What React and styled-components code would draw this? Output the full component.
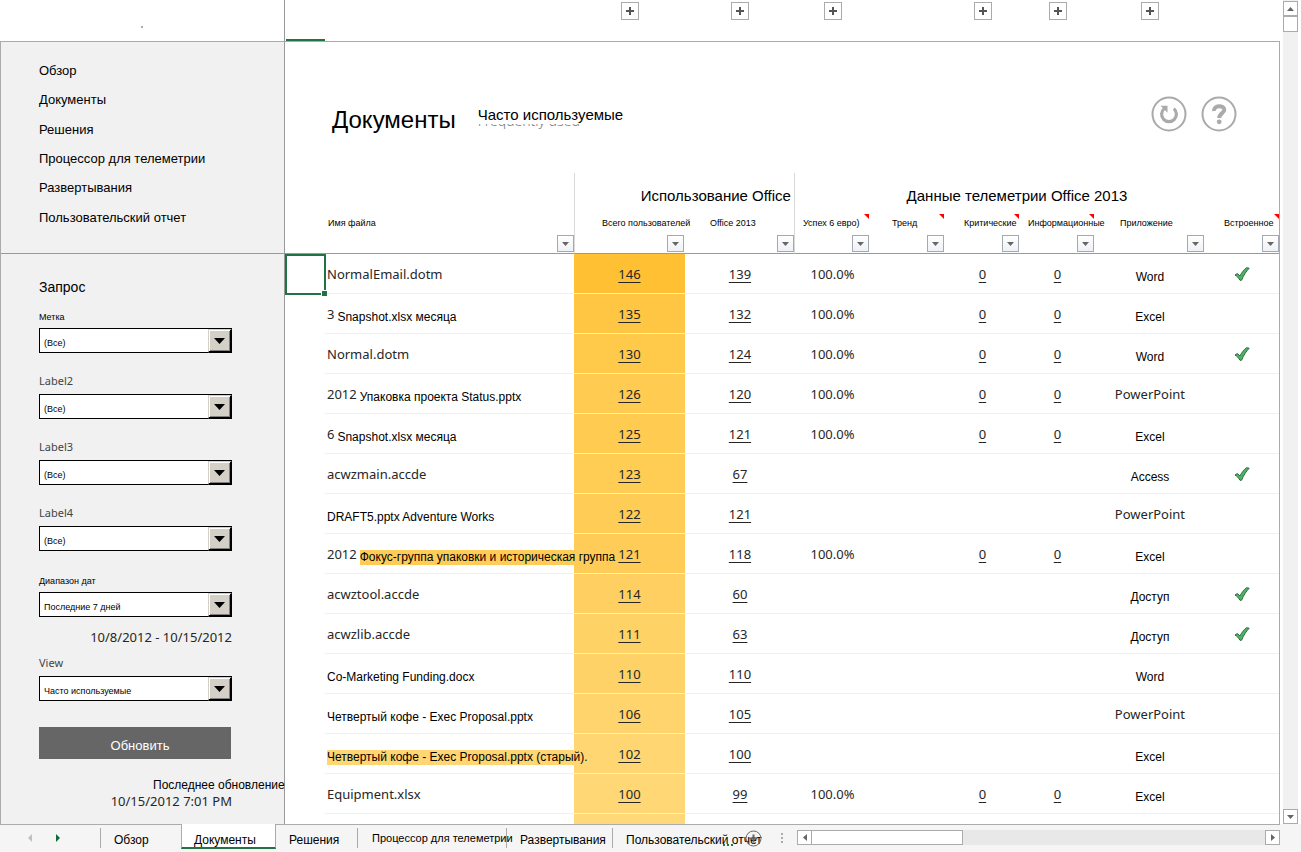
import React from "react";
import styled, { createGlobalStyle } from "styled-components";

const SANS = '"Liberation Sans", Arial, sans-serif';
const SEGOE = '"Noto Sans", "Open Sans", sans-serif';
const LINE = "#ababab";
const GREEN = "#217346";
const COLUMNS = "40px minmax(0, 1fr) 111px 110px 75px 75px 75px 75px 110px 74px";

const GlobalStyle = createGlobalStyle`
  *, *::before, *::after { box-sizing: border-box; }
  body { margin: 0; background: #fff; color: #000; font-family: ${SANS}; font-size: 13px; }
  button, select { font: inherit; color: inherit; }
`;

const Page = styled.div`
  height: 100vh;
  display: flex;
  flex-direction: column;
  overflow: hidden;
`;

const Workspace = styled.div`
  flex: 1;
  min-height: 0;
  display: flex;
  gap: 3px;
  padding-right: 3px;
`;

const Panes = styled.div`
  flex: 1;
  min-width: 0;
  display: grid;
  grid-template-columns: 285px minmax(0, 1fr);
  grid-template-rows: 42px minmax(0, 1fr);
`;

const Corner = styled.div`
  display: flex;
  align-items: flex-end;
  justify-content: center;
  padding-bottom: 13px;
  border-right: 1px solid #999;
  border-bottom: 1px solid ${LINE};
`;

const Dot = styled.i`
  width: 2px;
  height: 2px;
  background: ${LINE};
`;

const OutlineBar = styled.div`
  display: grid;
  grid-template-columns: ${COLUMNS};
  border-bottom: 1px solid ${LINE};
`;

const SelectedColumn = styled.div`
  align-self: end;
  height: 2px;
  margin-left: 1px;
  background: ${GREEN};
`;

const ExpandButton = styled.button`
  width: 18px;
  height: 18px;
  margin: 2px 2px 0 0;
  padding: 0;
  display: grid;
  place-items: center;
  justify-self: center;
  grid-column: ${(p) => p.$column};
  background: #fff;
  border: 1px solid ${LINE};
`;

const Sidebar = styled.aside`
  background: #f1f1f1;
  border-left: 1px solid ${LINE};
  border-right: 1px solid #999;
`;

const Nav = styled.nav`
  height: 212px;
  padding: 14px 38px 21px;
  display: grid;
  grid-auto-rows: 1fr;
  align-items: center;
  border-bottom: 1px solid #999;
`;

const NavLink = styled.a`
  color: #000;
  font-size: 13px;
  text-decoration: none;
`;

const Query = styled.form`
  width: 231px;
  padding: 23px 0 0 38px;
`;

const QueryTitle = styled.h2`
  margin: 0 0 9px;
  font-size: 14px;
  line-height: 20px;
  font-weight: 400;
`;

const Field = styled.div`
  margin-top: ${(p) => (p.$first ? 0 : p.$tight ? 8 : 19)}px;
`;

const FieldLabel = styled.label`
  display: block;
  height: 22px;
  line-height: ${(p) => (p.$native ? 18 : 22)}px;
  font-family: ${(p) => (p.$native ? SEGOE : SANS)};
  font-size: ${(p) => (p.$native ? 11 : 9)}px;
  color: ${(p) => (p.$native ? "#444" : "#000")};
`;

const SelectBox = styled.div`
  position: relative;
  width: 193px;
  height: 25px;
`;

const Select = styled.select`
  appearance: none;
  width: 100%;
  height: 100%;
  padding: 5px 26px 0 4px;
  background: #fff;
  border: 1px solid #000;
  border-radius: 0;
  font-size: 9px;
`;

const SelectArrow = styled.span`
  position: absolute;
  top: 1px;
  right: 0;
  width: 24px;
  height: 24px;
  display: grid;
  place-items: center;
  pointer-events: none;
  background: #d4d0c8;
  border: solid;
  border-width: 1px 2px 2px 1px;
  border-color: #d4d0c8 #000 #000 #d4d0c8;
  box-shadow: inset 1px 1px #fff, inset -1px -1px #808080;
`;

const DateRange = styled.p`
  margin: 11px 0 0;
  text-align: right;
  font-family: ${SEGOE};
  font-size: 13px;
  line-height: 18px;
  color: #262626;
`;

const RefreshButton = styled.button`
  width: 192px;
  height: 32px;
  margin-top: 26px;
  padding: 4px 0 0 10px;
  display: block;
  border: 0;
  background: #666;
  color: #fff;
  font-size: 13px;
`;

const Updated = styled.div`
  margin: 18px 0 0;
  line-height: 16px;
`;

const UpdatedLabel = styled.div`
  padding-left: 114px;
  font-size: 12px;
  white-space: nowrap;
`;

const UpdatedTime = styled.div`
  text-align: right;
  font-family: ${SEGOE};
  font-size: 13px;
  color: #262626;
`;

const Sheet = styled.main`
  min-width: 0;
  overflow: hidden;
  border-right: 1px solid ${LINE};
`;

const SheetHeader = styled.header`
  height: 131px;
  padding: 54px 42px 0 47px;
  display: flex;
  align-items: flex-start;
`;

const Title = styled.h1`
  margin: 10px 22px 0 0;
  font-size: 24px;
  line-height: 28px;
  font-weight: 400;
`;

const Subtitle = styled.div`
  display: grid;
  margin-top: 9px;
  font-size: 15px;
  white-space: nowrap;
`;

const SubtitleText = styled.span`
  grid-area: 1 / 1;
  height: 19px;
  line-height: 20px;
  background: #fff;
`;

const SubtitleShadow = styled.span`
  grid-area: 1 / 1;
  padding-top: 7px;
  line-height: 18px;
  font-family: ${SEGOE};
  font-size: 14px;
  font-weight: 300;
  color: #777;
`;

const Actions = styled.div`
  margin-left: auto;
  display: flex;
  gap: 14px;
`;

const RoundButton = styled.button`
  width: 36px;
  height: 36px;
  padding: 0;
  border: 0;
  background: none;
  svg { display: block; }
`;

const Table = styled.table`
  width: 100%;
  table-layout: fixed;
  border-collapse: separate;
  border-spacing: 0;
`;

const RULES = {
  left: "border-left: 1px solid #d9d9d9;",
  right: "border-right: 1px solid #d9d9d9;",
  both: "border-left: 1px solid #d9d9d9; border-right: 1px solid #d9d9d9;",
};

const GroupHead = styled.th`
  height: 38px;
  padding: 6px ${(p) => p.$right || 0}px 0 0;
  text-align: ${(p) => p.$align || "left"};
  font-size: 15px;
  font-weight: 400;
  white-space: nowrap;
  ${(p) => RULES[p.$rule]}
`;

const Head = styled.th`
  position: relative;
  height: 43px;
  padding: 0;
  font-size: 9px;
  font-weight: 400;
  text-align: left;
  vertical-align: top;
  white-space: nowrap;
  border-bottom: 1px solid #999;
  ${(p) => RULES[p.$rule]}
`;

const HeadInner = styled.div`
  height: 42px;
  padding: 5px ${(p) => (p.$flush ? 0 : 1)}px 1px 0;
  display: flex;
  flex-direction: column;
  justify-content: space-between;
`;

const HeadText = styled.span`
  padding-left: ${(p) => p.$indent}px;
  line-height: 14px;
`;

const FilterButton = styled.button`
  width: 17px;
  height: 17px;
  padding: 0;
  align-self: flex-end;
  display: grid;
  place-items: center;
  border: 1px solid #a3a9b3;
  background: linear-gradient(#fff, #eef1f6);
`;

const CommentMark = styled.i`
  position: absolute;
  top: 3px;
  right: ${(p) => (p.$flush ? 0 : 1)}px;
  border-top: 5px solid #f00;
  border-left: 5px solid transparent;
`;

const Cell = styled.td`
  height: 40px;
  padding: 0 0 0 ${(p) => p.$indent || 0}px;
  text-align: ${(p) => p.$align || "center"};
  vertical-align: middle;
  white-space: nowrap;
  border-bottom: 1px solid ${(p) => (p.$heat ? "#fff0cf" : "#f0f0f0")};
  svg { display: block; margin: 0 auto; }
`;

const Gutter = styled.td`
  position: relative;
  padding: 0;
`;

const Selection = styled.div`
  position: absolute;
  inset: 0 -1px -1px 0;
  border: 2px solid ${GREEN};
  &::after {
    content: "";
    position: absolute;
    right: -3px;
    bottom: -3px;
    width: 6px;
    height: 6px;
    background: ${GREEN};
    border: solid #fff;
    border-width: 1px 0 0 1px;
  }
`;

const Name = styled.span`
  display: flex;
  align-items: center;
  gap: 3px;
`;

const Native = styled.span`
  font-family: ${SEGOE};
  font-size: 13px;
  line-height: 18px;
  color: #262626;
`;

const Translated = styled.span`
  display: inline-block;
  padding-bottom: 0;
  margin-top: 7px;
  font-size: 12px;
  line-height: 15px;
  vertical-align: top;
`;

const Count = styled.a`
  font-family: ${SEGOE};
  font-size: 13px;
  line-height: 18px;
  color: #262626;
  text-decoration: underline;
  text-underline-offset: 3px;
`;

const ScrollColumn = styled.div`
  width: 15px;
  padding-top: 1px;
  display: flex;
  flex-direction: column;
  background: #f1f1f1;
`;

const ScrollButton = styled.button`
  width: 15px;
  height: 15px;
  padding: 0;
  flex: none;
  display: grid;
  place-items: center;
  background: #fff;
  border: 1px solid ${LINE};
`;

const VerticalThumb = styled.div`
  height: 16px;
  margin-bottom: auto;
  background: #fff;
  border: 1px solid ${LINE};
`;

const TabBar = styled.footer`
  height: 28px;
  flex: none;
  padding-right: 21px;
  background: #f5f5f5;
`;

const TabStrip = styled.div`
  height: 100%;
  display: flex;
  border-top: 1px solid ${LINE};
`;

const Tabs = styled.div`
  flex: 1;
  min-width: 0;
  display: flex;
`;

const TabArrows = styled.div`
  width: 101px;
  height: 20px;
  margin-top: 3px;
  padding: 0 38px 0 25px;
  display: flex;
  justify-content: space-between;
  border-right: 1px solid ${LINE};
`;

const ArrowButton = styled.button`
  width: 9px;
  padding: 0;
  display: grid;
  place-items: center;
  border: 0;
  background: none;
`;

const Tab = styled.a`
  width: ${(p) => p.$width}px;
  height: 20px;
  margin-top: 3px;
  padding: ${(p) => (p.$small ? 0 : 2)}px 0 0 ${(p) => (p.$small ? 14 : 13)}px;
  flex: none;
  line-height: 20px;
  font-size: ${(p) => (p.$small ? 11 : 12)}px;
  white-space: nowrap;
  text-decoration: none;
  color: #000;
  border-right: ${(p) => (p.$last ? "0" : `1px solid ${LINE}`)};
`;

const ActiveTab = styled(Tab)`
  height: 25px;
  margin-top: -1px;
  padding: 7px 0 0 12px;
  line-height: 18px;
  background: #fff;
  border-left: 1px solid ${LINE};
  border-bottom: 2px solid ${GREEN};
`;

const MoreSheets = styled.button`
  width: 16px;
  height: 20px;
  margin: 4px 6px 0 -22px;
  padding: 0;
  border: 0;
  background: none;
  svg { display: block; margin-top: 11px; }
`;

const AddSheet = styled.button`
  width: 17px;
  height: 17px;
  margin: 5px 0 0;
  padding: 0;
  border: 0;
  background: none;
  svg { display: block; }
`;

const Grip = styled.span`
  width: 2px;
  height: 12px;
  margin: 8px 14px 0 auto;
  background: repeating-linear-gradient(${LINE} 0 2px, transparent 2px 4px);
`;

const ScrollRow = styled.div`
  width: 483px;
  height: 15px;
  margin-top: 5px;
  display: flex;
  justify-content: space-between;
  background: #e8e8e8;
`;

const HorizontalThumb = styled.div`
  width: 152px;
  margin: 0 auto 0 -1px;
  background: #fff;
  border: 1px solid ${LINE};
`;

const Triangle = ({ dir, width = 7, height = 4, fill = "#666" }) => {
  const d = {
    down: `M0 0H${width}L${width / 2} ${height}Z`,
    up: `M0 ${height}H${width}L${width / 2} 0Z`,
    left: `M${width} 0V${height}L0 ${height / 2}Z`,
    right: `M0 0V${height}L${width} ${height / 2}Z`,
  }[dir];
  return (
    <svg width={width} height={height} aria-hidden="true">
      <path d={d} fill={fill} />
    </svg>
  );
};

const Plus = () => (
  <svg width="8" height="8" aria-hidden="true">
    <path d="M3 0h2v3h3v2H5v3H3V5H0V3h3z" fill="#555" />
  </svg>
);

const Check = () => (
  <svg width="16" height="14" viewBox="0 0 16 14" aria-label="Да">
    <path
      d="M1 8l2.4-1.6L6 9c1.6-3.4 3.6-6 6.500-8.300l2.700.500C12 4.500 9.500 8.500 7.600 13.200L6 13.300C4.600 11 3 9.300 1 8z"
      fill="#4fb269"
      stroke="#2d6b3c"
      strokeWidth="1"
      strokeLinejoin="round"
    />
  </svg>
);

const nav = ["Обзор", "Документы", "Решения", "Процессор для телеметрии", "Развертывания", "Пользовательский отчет"];

const filters = [
  { id: "label1", label: "Метка", value: "(Все)" },
  { id: "label2", label: "Label2", value: "(Все)", native: true },
  { id: "label3", label: "Label3", value: "(Все)", native: true },
  { id: "label4", label: "Label4", value: "(Все)", native: true },
  { id: "range", label: "Диапазон дат", value: "Последние 7 дней" },
];

const heads = [
  { text: "Имя файла", indent: 3, flush: true },
  { text: "Всего пользователей", indent: 27, rule: "left" },
  { text: "Office 2013", indent: 25, rule: "right", flush: true },
  { text: "Успех 6 евро)", indent: 8, mark: true },
  { text: "Тренд", indent: 22, mark: true },
  { text: "Критические", indent: 19, mark: true },
  { text: "Информационные", indent: 8, mark: true },
  { text: "Приложение", indent: 25 },
  { text: "Встроенное", indent: 19, mark: true, flush: true },
];

const rows = [
  { native: "NormalEmail.dotm", total: 146, office: 139, ok: true, app: "Word", builtIn: true },
  { native: "3", name: "Snapshot.xlsx месяца", total: 135, office: 132, ok: true, app: "Excel" },
  { native: "Normal.dotm", total: 130, office: 124, ok: true, app: "Word", builtIn: true },
  { native: "2012", name: "Упаковка проекта Status.pptx", total: 126, office: 120, ok: true, app: "PowerPoint" },
  { native: "6", name: "Snapshot.xlsx месяца", total: 125, office: 121, ok: true, app: "Excel" },
  { native: "acwzmain.accde", total: 123, office: 67, app: "Access", builtIn: true },
  { name: "DRAFT5.pptx Adventure Works", total: 122, office: 121, app: "PowerPoint" },
  { native: "2012", name: "Фокус-группа упаковки и историческая группа", marked: true, total: 121, office: 118, ok: true, app: "Excel" },
  { native: "acwztool.accde", total: 114, office: 60, app: "Доступ", builtIn: true },
  { native: "acwzlib.accde", total: 111, office: 63, app: "Доступ", builtIn: true },
  { name: "Co-Marketing Funding.docx", total: 110, office: 110, app: "Word" },
  { name: "Четвертый кофе - Exec Proposal.pptx", total: 106, office: 105, app: "PowerPoint" },
  { name: "Четвертый кофе - Exec Proposal.pptx (старый).", marked: true, total: 102, office: 100, app: "Excel" },
  { native: "Equipment.xlsx", total: 100, office: 99, ok: true, app: "Excel" },
  { total: 98 },
];

const heat = (value) => {
  const t = (146 - value) / 46;
  return `rgb(255, ${Math.round(193 + t * 22)}, ${Math.round(51 + t * 66)})`;
};

const FilterField = ({ id, label, value, native, first, tight }) => (
  <Field $first={first} $tight={tight}>
    <FieldLabel htmlFor={id} $native={native}>{label}</FieldLabel>
    <SelectBox>
      <Select id={id}>
        <option>{value}</option>
      </Select>
      <SelectArrow>
        <Triangle dir="down" width={11} height={6} fill="#000" />
      </SelectArrow>
    </SelectBox>
  </Field>
);

const Row = ({ row, selected }) => (
  <tr>
    <Gutter>{selected && <Selection />}</Gutter>
    <Cell $align="left" $indent={2}>
      <Name>
        {row.native && <Native>{row.native}</Native>}
        {row.name && (
          <Translated style={row.marked ? { background: heat(row.total) } : undefined}>{row.name}</Translated>
        )}
      </Name>
    </Cell>
    <Cell $heat style={{ backgroundColor: heat(row.total) }}>
      {row.office && <Count href="#">{row.total}</Count>}
    </Cell>
    <Cell>{row.office && <Count href="#">{row.office}</Count>}</Cell>
    <Cell>{row.ok && <Native>100.0%</Native>}</Cell>
    <Cell />
    <Cell>{row.ok && <Count href="#">0</Count>}</Cell>
    <Cell>{row.ok && <Count href="#">0</Count>}</Cell>
    <Cell>{row.app === "PowerPoint" ? <Native>{row.app}</Native> : row.app && <Translated>{row.app}</Translated>}</Cell>
    <Cell>{row.builtIn && <Check />}</Cell>
  </tr>
);

export default function App() {
  return (
    <Page>
      <GlobalStyle />
      <Workspace>
        <Panes>
          <Corner><Dot /></Corner>
          <OutlineBar>
            <SelectedColumn />
            {[3, 4, 5, 7, 8, 9].map((column) => (
              <ExpandButton key={column} $column={column} aria-label="Развернуть"><Plus /></ExpandButton>
            ))}
          </OutlineBar>
          <Sidebar>
            <Nav>
              {nav.map((item) => <NavLink key={item} href="#">{item}</NavLink>)}
            </Nav>
            <Query>
              <QueryTitle>Запрос</QueryTitle>
              {filters.map((f, i) => <FilterField key={f.id} {...f} first={i === 0} />)}
              <DateRange>10/8/2012 - 10/15/2012</DateRange>
              <FilterField id="view" label="View" value="Часто используемые" native tight />
              <RefreshButton type="button">Обновить</RefreshButton>
              <Updated>
                <UpdatedLabel>Последнее обновление</UpdatedLabel>
                <UpdatedTime>10/15/2012 7:01 PM</UpdatedTime>
              </Updated>
            </Query>
          </Sidebar>
          <Sheet>
            <SheetHeader>
              <Title>Документы</Title>
              <Subtitle>
                <SubtitleShadow>Frequently used</SubtitleShadow>
                <SubtitleText>Часто используемые</SubtitleText>
              </Subtitle>
              <Actions>
                <RoundButton aria-label="Обновить данные">
                  <svg width="36" height="36" fill="none" stroke="#aaa">
                    <circle cx="18" cy="18" r="16.500" strokeWidth="2" />
                    <path d="M13.200 12.600A7.400 7.400 0 1 0 22.800 12.600" strokeWidth="3.200" />
                    <path d="M9.500 9.800H16.500V16.800Z" fill="#aaa" stroke="none" />
                  </svg>
                </RoundButton>
                <RoundButton aria-label="Справка">
                  <svg width="36" height="36" fill="none" stroke="#aaa">
                    <circle cx="18" cy="18" r="16.500" strokeWidth="2" />
                    <path d="M13 15C12.500 8.800 23.300 8.800 23.300 13.800C23.300 17.300 18.200 17 18.200 22" strokeWidth="4" />
                    <circle cx="18.200" cy="25.800" r="2.400" fill="#aaa" stroke="none" />
                  </svg>
                </RoundButton>
              </Actions>
            </SheetHeader>
            <Table>
              <colgroup>
                <col style={{ width: 40 }} />
                <col />
                {[111, 110, 75, 75, 75, 75, 110, 74].map((width, i) => <col key={i} style={{ width }} />)}
              </colgroup>
              <thead>
                <tr>
                  <GroupHead />
                  <GroupHead />
                  <GroupHead colSpan={2} $align="right" $right={3} $rule="both">Использование Office</GroupHead>
                  <GroupHead colSpan={6} $align="center" $right={40}>Данные телеметрии Office 2013</GroupHead>
                </tr>
                <tr>
                  <Head />
                  {heads.map((h) => (
                    <Head key={h.text} $rule={h.rule}>
                      <HeadInner $flush={h.flush}>
                        <HeadText $indent={h.indent}>{h.text}</HeadText>
                        <FilterButton aria-label={`Фильтр: ${h.text}`}><Triangle dir="down" /></FilterButton>
                      </HeadInner>
                      {h.mark && <CommentMark $flush={h.flush} />}
                    </Head>
                  ))}
                </tr>
              </thead>
              <tbody>
                {rows.map((row, i) => <Row key={i} row={row} selected={i === 0} />)}
              </tbody>
            </Table>
          </Sheet>
        </Panes>
        <ScrollColumn>
          <ScrollButton aria-label="Вверх"><Triangle dir="up" /></ScrollButton>
          <VerticalThumb />
          <ScrollButton aria-label="Вниз"><Triangle dir="down" /></ScrollButton>
        </ScrollColumn>
      </Workspace>
      <TabBar>
        <TabStrip>
          <Tabs>
            <TabArrows>
              <ArrowButton aria-label="Предыдущий лист"><Triangle dir="left" width={4} height={8} fill="#c0c0c0" /></ArrowButton>
              <ArrowButton aria-label="Следующий лист"><Triangle dir="right" width={4} height={8} fill="#0e6b3b" /></ArrowButton>
            </TabArrows>
            <Tab href="#" $width={80} $last>Обзор</Tab>
            <ActiveTab href="#" $width={95}>Документы</ActiveTab>
            <Tab href="#" $width={82}>Решения</Tab>
            <Tab href="#" $width={149} $small>Процессор для телеметрии</Tab>
            <Tab href="#" $width={106}>Развертывания</Tab>
            <Tab href="#" $width={132} $last>Пользовательский отчет</Tab>
            <MoreSheets aria-label="Другие листы">
              <svg width="10" height="2" fill={GREEN}>
                <path d="M0 0h2v2H0zM4 0h2v2H4zM8 0h2v2H8z" />
              </svg>
            </MoreSheets>
            <AddSheet aria-label="Новый лист">
              <svg width="17" height="17" fill="none" stroke="#666">
                <circle cx="8.500" cy="8.500" r="7.500" />
                <path d="M8.500 4.500v8M4.500 8.500h8" strokeWidth="2" />
              </svg>
            </AddSheet>
            <Grip />
          </Tabs>
          <ScrollRow>
            <ScrollButton aria-label="Влево"><Triangle dir="left" width={4} height={7} /></ScrollButton>
            <HorizontalThumb />
            <ScrollButton aria-label="Вправо"><Triangle dir="right" width={4} height={7} /></ScrollButton>
          </ScrollRow>
        </TabStrip>
      </TabBar>
    </Page>
  );
}
